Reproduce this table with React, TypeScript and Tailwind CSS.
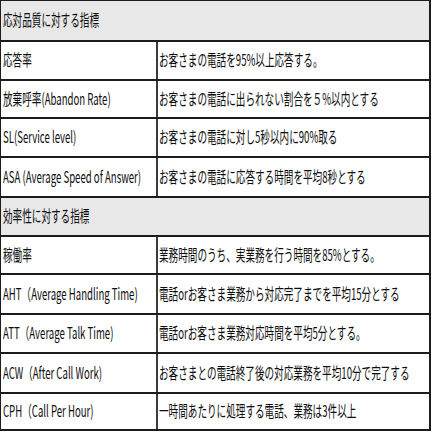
import React from "react";

type Row = { h: number; head?: string; a?: string; b?: string };

const rows: Row[] = [
  { h: 41, head: "応対品質に対する指標" },
  { h: 39, a: "応答率", b: "お客さまの電話を95%以上応答する。" },
  { h: 38, a: "放棄呼率(Abandon Rate)", b: "お客さまの電話に出られない割合を５%以内とする" },
  { h: 39, a: "SL(Service level)", b: "お客さまの電話に対し5秒以内に90%取る" },
  { h: 40, a: "ASA (Average Speed of Answer)", b: "お客さまの電話に応答する時間を平均8秒とする" },
  { h: 39, head: "効率性に対する指標" },
  { h: 38, a: "稼働率", b: "業務時間のうち、実業務を行う時間を85%とする。" },
  { h: 40, a: "AHT（Average Handling Time)", b: "電話orお客さま業務から対応完了までを平均15分とする" },
  { h: 39, a: "ATT（Average Talk Time)", b: "電話orお客さま業務対応時間を平均5分とする。" },
  { h: 40, a: "ACW（After Call Work)", b: "お客さまとの電話終了後の対応業務を平均10分で完了する" },
  { h: 37, a: "CPH（Call Per Hour)", b: "一時間あたりに処理する電話、業務は3件以上" },
];

function T({ children }: { children: React.ReactNode }) {
  return (
    <span className="inline-block origin-left scale-x-[0.6] whitespace-nowrap pb-[3px] text-[16px] leading-none text-[#0d0d0d]">
      {children}
    </span>
  );
}

export default function App() {
  return (
    <div
      className="w-[432px] h-[432px] bg-white overflow-hidden"
      style={{ fontFamily: '"Noto Sans CJK JP", "Noto Sans", sans-serif' }}
    >
      <div className="w-[431px] border-t border-l border-r-2 border-[#1c1c1c]">
        {rows.map((r, i) =>
          r.head ? (
            <div
              key={i}
              className="flex items-center overflow-hidden bg-[#e8e8e8] border-b-2 border-[#1c1c1c] pl-[2px]"
              style={{ height: r.h }}
            >
              <T>{r.head}</T>
            </div>
          ) : (
            <div
              key={i}
              className="flex border-b-2 border-[#1c1c1c]"
              style={{ height: r.h }}
            >
              <div className="flex w-[157px] shrink-0 items-center overflow-hidden border-r-2 border-[#3a3a3a] pl-[2px]">
                <T>{r.a}</T>
              </div>
              <div className="flex min-w-0 flex-1 items-center overflow-hidden pl-[1px]">
                <T>{r.b}</T>
              </div>
            </div>
          )
        )}
      </div>
    </div>
  );
}
